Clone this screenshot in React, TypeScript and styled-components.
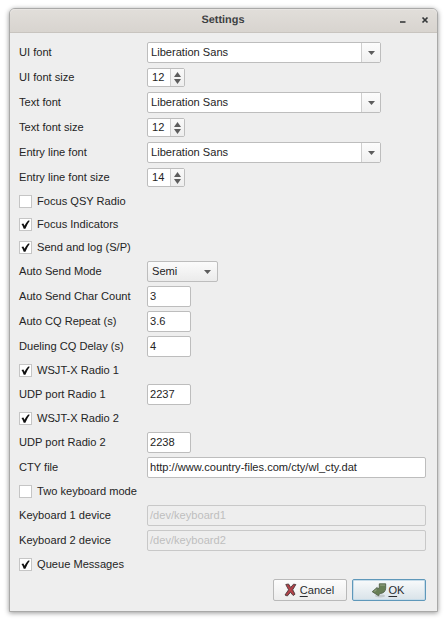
import React from "react";
import styled, { createGlobalStyle } from "styled-components";

const GlobalStyle = createGlobalStyle`
  *, *::before, *::after { box-sizing: border-box; }
  body {
    margin: 0;
    background: #fff;
    color: #242424;
    font-family: "Liberation Sans", Arial, sans-serif;
    font-size: 11.1px;
    line-height: 15px;
    overflow: hidden;
  }
`;

const Desktop = styled.div`
  width: 446px;
  height: 623px;
  padding: 7.5px 0 0 8.5px;
`;

const Dialog = styled.section`
  width: 429px;
  height: 604.5px;
  border: 1px solid #a9a9a8;
  border-radius: 6px 6px 0 0;
  background: #eeeeee;
  box-shadow: 0 1px 5px rgba(0, 0, 0, 0.42);
  display: flex;
  flex-direction: column;
`;

const TitleBar = styled.header`
  height: 24.5px;
  flex: none;
  display: grid;
  grid-template-columns: 1fr auto 1fr;
  align-items: center;
  border-radius: 5px 5px 0 0;
  border-bottom: 1px solid #c8c4bf;
  background: linear-gradient(#e1deda, #d8d4cf);
  box-shadow: inset 0 1px #e8e5e2;
`;

const Title = styled.h1`
  grid-column: 2;
  margin: 0;
  font-size: 10.9px;
  font-weight: 700;
  color: #3d4042;
  text-rendering: geometricPrecision;
`;

const WindowControls = styled.div`
  display: flex;
  justify-content: flex-end;
  gap: 14px;
  padding-right: 8px;
  svg { display: block; }
`;

const Form = styled.form`
  flex: 1;
  display: flex;
  flex-direction: column;
  padding: 7px 10.5px 10px 9.5px;
`;

const Row = styled.div`
  height: 25px;
  flex: none;
  display: grid;
  grid-template-columns: 128px 1fr;
  align-items: center;
`;

const CheckRow = styled.label`
  height: 23px;
  flex: none;
  display: flex;
  align-items: center;
  gap: 5px;
`;

const CheckBox = styled.span`
  width: 13px;
  height: 13px;
  border: 1px solid #c5c5c5;
  background: #fff;
  svg { display: block; }
`;

const Field = styled.div<{ $width?: number; $disabled?: boolean }>`
  width: ${(p) => (p.$width ? `${p.$width}px` : "100%")};
  height: 21px;
  padding: 0 0 0 2px;
  display: flex;
  align-items: center;
  border: 1px solid ${(p) => (p.$disabled ? "#c8c8c8" : "#bdbdbd")};
  border-radius: 2px;
  background: ${(p) => (p.$disabled ? "#eeeeee" : "#fff")};
  color: ${(p) => (p.$disabled ? "#bebebe" : "inherit")};
`;

const Combo = styled(Field)`
  justify-content: space-between;
  padding-left: 3px;
`;

const ComboArrow = styled.span`
  width: 19px;
  height: 19px;
  display: grid;
  place-items: center;
  border-left: 1px solid #cecece;
  background: linear-gradient(#fcfcfc, #f0f0f0);
`;

const Spin = styled(Field)`
  height: 19px;
  padding-left: 4px;
  justify-content: space-between;
`;

const SpinArrows = styled.span`
  width: 14px;
  height: 17px;
  display: flex;
  flex-direction: column;
  align-items: center;
  justify-content: center;
  gap: 2px;
  border-left: 1px solid #cecece;
  background: linear-gradient(#f9f9f9, #eeeeee);
`;

const Select = styled(Field)`
  justify-content: space-between;
  padding: 0 6px 0 4px;
  background: linear-gradient(#fbfbfb, #ebebeb);
`;

const Buttons = styled.footer`
  margin-top: auto;
  display: flex;
  justify-content: flex-end;
  gap: 5px;
`;

const Button = styled.button<{ $primary?: boolean }>`
  width: 74px;
  height: 22px;
  padding: 0 2px 0 0;
  display: flex;
  align-items: center;
  justify-content: center;
  gap: ${(p) => (p.$primary ? 1 : 3)}px;
  border: 1px solid ${(p) => (p.$primary ? "#5f98ba" : "#b9b9b9")};
  border-radius: 2px;
  background: ${(p) =>
    p.$primary ? "linear-gradient(#f8fafb, #d9e3e9)" : "linear-gradient(#fdfdfd, #ececec)"};
  box-shadow: ${(p) => (p.$primary ? "inset 0 0 0 1px #c6dce9" : "none")};
  font: inherit;
  color: #292d30;
`;

const Mnemonic = styled.span`
  text-decoration: underline;
  text-decoration-thickness: 1px;
  text-underline-offset: 2px;
`;

const Arrow = ({ up = false, height = 4 }: { up?: boolean; height?: number }) => (
  <svg width="7" height={height} viewBox="0 0 7 4" preserveAspectRatio="none">
    <path d={up ? "M0 4L3.5 0L7 4Z" : "M0 0H7L3.5 4Z"} fill="#5d5d5d" />
  </svg>
);

const FontField = ({ label }: { label: string }) => (
  <Row>
    <span>{label}</span>
    <Combo $width={234}>
      Liberation Sans
      <ComboArrow><Arrow /></ComboArrow>
    </Combo>
  </Row>
);

const SizeField = ({ label, value }: { label: string; value: number }) => (
  <Row>
    <span>{label}</span>
    <Spin $width={38}>
      {value}
      <SpinArrows><Arrow up height={5} /><Arrow height={5} /></SpinArrows>
    </Spin>
  </Row>
);

type TextFieldProps = { label: string; value: string; width?: number; disabled?: boolean };

const TextField = ({ label, value, width, disabled }: TextFieldProps) => (
  <Row>
    <span>{label}</span>
    <Field $width={width} $disabled={disabled}>{value}</Field>
  </Row>
);

const Check = ({ label, checked = false }: { label: string; checked?: boolean }) => (
  <CheckRow>
    <CheckBox>
      {checked && (
        <svg width="11" height="11" viewBox="0 0 11 11">
          <path d="M1.5 5L3.4 4.5L4.5 6.7Q6 3.7 8.2 1.4L9.8 1.8Q7.2 5.1 5.4 9.7H3.7Q2.9 7 1.5 5Z" fill="#101010" />
        </svg>
      )}
    </CheckBox>
    {label}
  </CheckRow>
);

const CancelIcon = () => (
  <svg width="13" height="14" viewBox="0 0 13 14">
    <path
      d="M1.8 1.5L4.5 1L6.7 4.5L9.5 1.2L11.8 1.5L8.7 6.8L11 11.2L9.2 12.5L6.4 9.3L3.3 13L1 12L4.6 6.8Z"
      fill="#a83c43" stroke="#5a4345" strokeWidth="1" strokeLinejoin="round"
    />
    <path d="M3.2 2.3L9.3 11M9.7 2.5L3 11.3" stroke="#bd4a51" strokeWidth=".8" />
  </svg>
);

const OkIcon = () => (
  <svg width="16" height="15" viewBox="0 0 16 15">
    <ellipse cx="9" cy="13" rx="5" ry="1.4" fill="#9aa19d" opacity=".4" />
    <path
      d="M8.3 .8H14.7V5.2Q14.5 10.2 8.5 10.6L7.6 12.8L1.2 8.7L6.2 4.4V5.8Q8.6 5.8 8.3 4Z"
      fill="#687f55" stroke="#4d5c44" strokeWidth=".8" strokeLinejoin="round"
    />
    <path d="M8.9 1.4H14V2.8H9.3ZM2.5 8.5L5.6 5.8V7.2L4 8.8Z" fill="#8d9d7d" />
  </svg>
);

export default function App() {
  return (
    <Desktop>
      <GlobalStyle />
      <Dialog>
        <TitleBar>
          <Title>Settings</Title>
          <WindowControls>
            <svg width="8" height="8" viewBox="0 0 8 8"><path d="M1 6H6.5" stroke="#36393a" strokeWidth="1.6" /></svg>
            <svg width="8" height="8" viewBox="0 0 8 8"><path d="M1.5 1.5L6.5 6.5M6.5 1.5L1.5 6.5" stroke="#36393a" strokeWidth="1.7" /></svg>
          </WindowControls>
        </TitleBar>
        <Form>
          <FontField label="UI font" />
          <SizeField label="UI font size" value={12} />
          <FontField label="Text font" />
          <SizeField label="Text font size" value={12} />
          <FontField label="Entry line font" />
          <SizeField label="Entry line font size" value={14} />
          <Check label="Focus QSY Radio" />
          <Check label="Focus Indicators" checked />
          <Check label="Send and log (S/P)" checked />
          <Row>
            <span>Auto Send Mode</span>
            <Select $width={71}>Semi<Arrow /></Select>
          </Row>
          <TextField label="Auto Send Char Count" value="3" width={44} />
          <TextField label="Auto CQ Repeat (s)" value="3.6" width={44} />
          <TextField label="Dueling CQ Delay (s)" value="4" width={44} />
          <Check label="WSJT-X Radio 1" checked />
          <TextField label="UDP port Radio 1" value="2237" width={44} />
          <Check label="WSJT-X Radio 2" checked />
          <TextField label="UDP port Radio 2" value="2238" width={44} />
          <TextField label="CTY file" value="http://www.country-files.com/cty/wl_cty.dat" />
          <Check label="Two keyboard mode" />
          <TextField label="Keyboard 1 device" value="/dev/keyboard1" disabled />
          <TextField label="Keyboard 2 device" value="/dev/keyboard2" disabled />
          <Check label="Queue Messages" checked />
          <Buttons>
            <Button type="button"><CancelIcon /><span><Mnemonic>C</Mnemonic>ancel</span></Button>
            <Button type="button" $primary><OkIcon /><span><Mnemonic>O</Mnemonic>K</span></Button>
          </Buttons>
        </Form>
      </Dialog>
    </Desktop>
  );
}
